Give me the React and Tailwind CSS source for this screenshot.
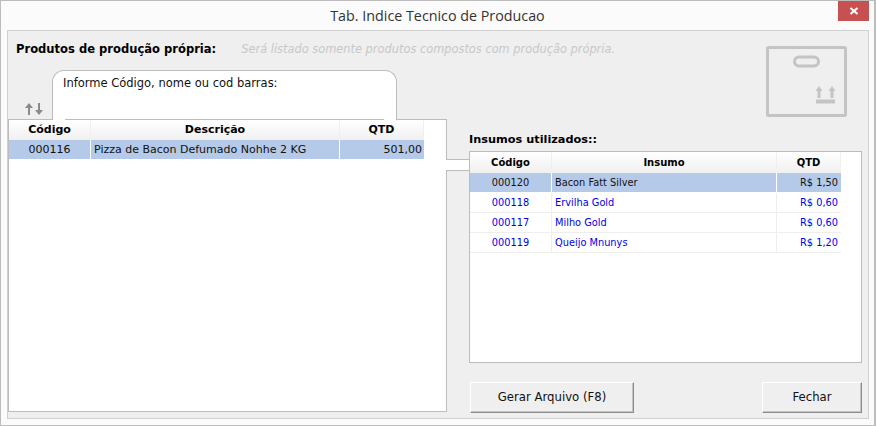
const produtos = [{ codigo: '000116', descricao: 'Pizza de Bacon Defumado Nohhe 2 KG', qtd: '501,00' }]

const insumos = [
  { codigo: '000120', nome: 'Bacon Fatt Silver', qtd: 'R$ 1,50', selected: true },
  { codigo: '000118', nome: 'Ervilha Gold', qtd: 'R$ 0,60' },
  { codigo: '000117', nome: 'Milho Gold', qtd: 'R$ 0,60' },
  { codigo: '000119', nome: 'Queijo Mnunys', qtd: 'R$ 1,20' },
]

function HeaderCell({ className, children }) {
  return (
    <div className={`flex items-center justify-center font-bold border-r border-[#f0f0f0] bg-gradient-to-b from-white to-[#f0f0f0] text-black ${className}`}>
      {children}
    </div>
  )
}

function SortArrows() {
  return (
    <svg width="20" height="12" viewBox="0 0 20 12" fill="#8a8a8a">
      <path d="M5 0 L9 5 L6 5 L6 12 L4 12 L4 5 L1 5 Z" />
      <path d="M15 12 L11 7 L14 7 L14 0 L16 0 L16 7 L19 7 Z" />
    </svg>
  )
}

function BoxIcon() {
  return (
    <svg width="81" height="71" viewBox="0 0 81 71" fill="none" stroke="#c4c4c4" strokeWidth="3">
      <rect x="1.5" y="1.5" width="78" height="68" rx="1" />
      <rect x="28.5" y="11" width="24" height="9" rx="4.5" />
      <path d="M53 52 V44 M66 52 V44" />
      <path d="M49.5 45 L53 40 L56.5 45 Z M62.5 45 L66 40 L69.5 45 Z" fill="#c4c4c4" stroke="none" />
      <path d="M50 55.5 H69" strokeWidth="4" />
    </svg>
  )
}

function RaisedButton({ className, children }) {
  return (
    <button className={`h-[31px] text-[11.7px] text-[#111] bg-[#efefef] border border-t-white border-l-white border-r-[#8c8c8c] border-b-[#8c8c8c] shadow-[inset_-1px_-1px_0_#c4c4c4] ${className}`}>
      {children}
    </button>
  )
}

export default function App() {
  return (
    <div className="w-[876px] h-[426px] flex flex-col bg-[#fbfbfb] border border-[#bcbcbc] border-r-2 text-[11.4px] text-[#111]" style={{ fontFamily: '"DejaVu Sans", Verdana, sans-serif' }}>
      <div className="h-[29px] shrink-0 flex items-start relative">
        <div className="flex-1 text-center pt-[4px] text-[14.3px] text-[#333]" style={{ fontFamily: '"Open Sans", sans-serif' }}>
          Tab. Indice Tecnico de Producao
        </div>
        <div className="absolute right-[5px] top-0 w-[31px] h-[20px] bg-[#c75050] flex items-center justify-center">
          <svg width="10" height="10" viewBox="0 0 10 10" stroke="white" strokeWidth="2"><path d="M1.5 2 L8.5 8 M8.5 2 L1.5 8" /></svg>
        </div>
      </div>

      <div className="ml-[6px] mr-[5px] h-[389px] shrink-0 flex bg-[#efefef] border border-[#d0d0d0] relative">
        <div className="w-[439px] shrink-0 flex flex-col">
          <div className="h-[39px] shrink-0 flex items-end pl-[8px] gap-[25px] whitespace-nowrap pb-[12px]">
            <span className="font-bold text-[11.55px] text-black">Produtos de produção própria:</span>
            <span className="italic text-[#c8c8c8]">Será listado somente produtos compostos com produção própria.</span>
          </div>
          <div className="h-[49px] shrink-0 flex items-end">
            <div className="w-[44px] pl-[16px] pb-[4px]"><SortArrows /></div>
            <div className="relative w-[345px] h-[50px] -mb-px bg-white border border-b-0 border-[#bcbcbc] rounded-t-[12px] pl-[10px] pt-[4px] z-10 text-[11.5px]">
              Informe Código, nome ou cod barras:
              <div className="absolute left-[12px] right-[12px] bottom-0 h-px bg-[#bcbcbc]" />
            </div>
          </div>
          <div className="h-[293px] shrink-0 bg-white border border-[#bcbcbc] relative">
            <div className="w-[415px] h-[20px] flex">
              <HeaderCell className="w-[82px] text-[11px]">Código</HeaderCell>
              <HeaderCell className="w-[249px] text-[11px]">Descrição</HeaderCell>
              <HeaderCell className="w-[84px] text-[11px]">QTD</HeaderCell>
            </div>
            {produtos.map((p) => (
              <div key={p.codigo} className="w-[415px] h-[20px] flex bg-[#b5c9e8] border-b border-white leading-[20px] text-[11px]">
                <div className="w-[82px] text-center border-r border-white">{p.codigo}</div>
                <div className="w-[249px] pl-[3px] border-r border-white">{p.descricao}</div>
                <div className="w-[84px] pr-[2px] text-right">{p.qtd}</div>
              </div>
            ))}
            <div className="absolute left-[437px] top-[39px] w-[23px] h-[12px] bg-white border-y border-[#bcbcbc]" />
          </div>
        </div>

        <div className="w-[393px] ml-[22px] shrink-0 flex flex-col relative">
          <div className="h-[120px] shrink-0 flex flex-col justify-end pb-[2px]">
            <div className="font-bold text-[11.3px] text-black whitespace-nowrap">Insumos utilizados::</div>
          </div>
          <div className="absolute left-[297px] top-[15px]"><BoxIcon /></div>
          <div className="h-[212px] shrink-0 bg-white border border-[#bcbcbc]">
            <div className="w-[371px] h-[21px] flex">
              <HeaderCell className="w-[82px] text-[10px]">Código</HeaderCell>
              <HeaderCell className="w-[225px] text-[10px]">Insumo</HeaderCell>
              <HeaderCell className="w-[64px] text-[10px]">QTD</HeaderCell>
            </div>
            {insumos.map((i) => (
              <div key={i.codigo} className={`w-[371px] h-[20px] flex text-[9.8px] border-b leading-[20px] ${i.selected ? 'bg-[#b5c9e8] border-white text-[#111]' : 'border-[#eeeeee] text-[#0000ee]'}`}>
                <div className={`w-[82px] text-center border-r ${i.selected ? 'border-white' : 'border-[#eeeeee]'}`}>{i.codigo}</div>
                <div className={`w-[225px] pl-[3px] border-r ${i.selected ? 'border-white' : 'border-[#eeeeee]'}`}>{i.nome}</div>
                <div className="w-[64px] pr-[3px] text-right">{i.qtd}</div>
              </div>
            ))}
          </div>
          <div className="flex justify-between mt-[19px] pl-[1px]">
            <RaisedButton className="w-[164px]">Gerar Arquivo (F8)</RaisedButton>
            <RaisedButton className="w-[100px]">Fechar</RaisedButton>
          </div>
        </div>
      </div>
    </div>
  )
}
